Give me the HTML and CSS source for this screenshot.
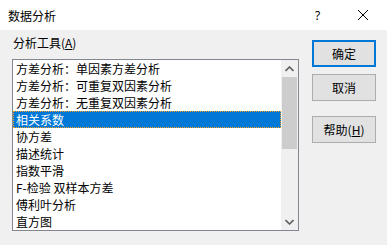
FILE: index.html
```html
<!DOCTYPE html>
<html lang="zh">
<head>
<meta charset="utf-8">
<link rel="stylesheet" href="styles.css">
</head>
<body>
<div class="dialog">
  <div class="titlebar">
    <span class="title">数据分析</span>
    <span class="help-q">?</span>
    <span class="close">
      <svg width="12" height="12" viewBox="0 0 12 12"><path d="M1 1 L11 11 M11 1 L1 11" stroke="#000" stroke-width="1" fill="none"/></svg>
    </span>
  </div>
  <div class="content">
    <div class="left">
      <div class="label">分析工具(<u>A</u>)</div>
      <div class="listbox">
        <ul class="items">
          <li>方差分析：单因素方差分析</li>
          <li>方差分析：可重复双因素分析</li>
          <li>方差分析：无重复双因素分析</li>
          <li class="selected">相关系数</li>
          <li>协方差</li>
          <li>描述统计</li>
          <li>指数平滑</li>
          <li>F-检验 双样本方差</li>
          <li>傅利叶分析</li>
          <li>直方图</li>
        </ul>
        <div class="scrollbar">
          <div class="arrow">
            <svg width="9" height="6" viewBox="0 0 9 6"><path d="M0.5 5 L4.5 1 L8.5 5" stroke="#606060" stroke-width="1.6" fill="none"/></svg>
          </div>
          <div class="track"><div class="thumb"></div></div>
          <div class="arrow">
            <svg width="9" height="6" viewBox="0 0 9 6"><path d="M0.5 1 L4.5 5 L8.5 1" stroke="#606060" stroke-width="1.6" fill="none"/></svg>
          </div>
        </div>
      </div>
    </div>
    <div class="right">
      <button class="btn default">确定</button>
      <button class="btn">取消</button>
      <button class="btn help">帮助(<u>H</u>)</button>
    </div>
  </div>
</div>
</body>
</html>
```
FILE: styles.css
```css
* { box-sizing: border-box; }
html, body { margin: 0; padding: 0; }
body {
  width: 387px;
  height: 245px;
  overflow: hidden;
  font-family: "Noto Sans CJK SC", "Microsoft YaHei", sans-serif;
  font-size: 12px;
  color: #000;
  background: #f0f0f0;
}
.dialog { width: 387px; height: 245px; display: flex; flex-direction: column; }
.titlebar {
  height: 30px;
  background: #fff;
  display: flex;
  align-items: center;
  flex: none;
}
.title { padding-left: 8px; flex: 1; font-size: 12px; }
.help-q { width: 10px; margin-right: 32px; font-family: "Noto Sans", sans-serif; font-size: 12px; }
.close { width: 12px; height: 12px; margin-right: 18px; display: flex; }
.content {
  flex: 1;
  display: flex;
  padding: 3px 0 0 12px;
}
.left { width: 287px; display: flex; flex-direction: column; }
.label { line-height: 20px; height: 20px; margin-bottom: 6px; padding-left: 1px; }
.label u, .btn u { text-decoration: underline; text-underline-offset: 1px; }
.listbox {
  width: 287px;
  height: 172px;
  border: 1px solid #828790;
  background: #fff;
  display: flex;
}
.items {
  list-style: none;
  margin: 0;
  padding: 0;
  flex: 1;
}
.items li {
  height: 17px;
  line-height: 17px;
  padding-left: 3px;
  white-space: nowrap;
  overflow: hidden;
}
.items li.selected {
  background: #0078d7;
  color: #fff;
  outline: 1px dotted #f7a020;
  outline-offset: -1px;
}
.scrollbar {
  width: 17px;
  background: #f0f0f0;
  display: flex;
  flex-direction: column;
}
.arrow { height: 17px; display: flex; align-items: center; justify-content: center; }
.track { flex: 1; }
.thumb { margin: 0 1px; height: 72px; background: #cdcdcd; }
.right {
  display: flex;
  flex-direction: column;
  padding-left: 13px;
  padding-top: 7px;
}
.btn {
  width: 64px;
  height: 27px;
  background: #e1e1e1;
  border: 1px solid #adadad;
  font-family: inherit;
  font-size: 12px;
  color: #000;
  padding: 0;
  margin: 0 0 7px 0;
}
.btn.default { border: 2px solid #0078d7; }
.btn.help { margin-top: 8px; }
```
